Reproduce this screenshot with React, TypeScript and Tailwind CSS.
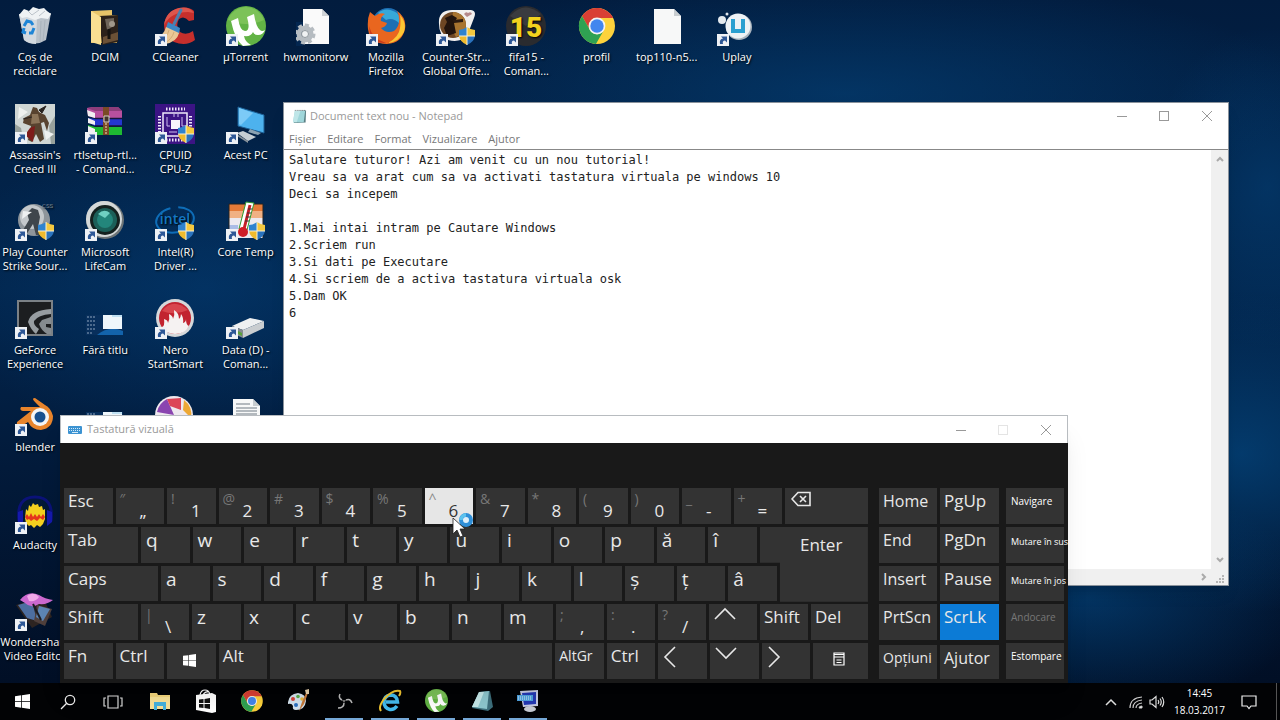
import { useState } from 'react'
import type { ReactNode } from 'react'
import clsx from 'clsx'

type SvgProps = {
  className?: string
}

type DesktopItem = {
  label: string[]
  icon: ReactNode
  shortcut?: boolean
  shield?: boolean
}

type KeyDef = {
  label: string
  sub?: string
  icon?: ReactNode
  className?: string
}

const ChromeIcon = ({ className = 'size-10' }: SvgProps) => (
  <svg viewBox="0 0 40 40" className={className} aria-hidden>
    <circle cx="20" cy="20" r="18" fill="#fdd23c" />
    <path d="M20 12H36.1A18 18 0 0 0 5 10L13 24A8 8 0 0 1 20 12Z" fill="#d93f35" />
    <path d="M5 10A18 18 0 0 0 18.9 38L27 24A8 8 0 0 1 13 24Z" fill="#2fa252" />
    <circle cx="20" cy="20" r="8.4" fill="#f3f3f3" />
    <circle cx="20" cy="20" r="6.7" fill="#4286ee" />
  </svg>
)

const TorrentIcon = ({ className = 'size-10' }: SvgProps) => (
  <svg viewBox="0 0 40 40" className={className} aria-hidden>
    <circle cx="20" cy="20" r="20" fill="#62b345" />
    <path d="M2 14A19 19 0 0 1 38 14Q20 22 2 14Z" fill="#7cc258" />
    <path
      d="M5 15L12 12Q14 25 19 25Q25 25 21 11L28 8Q30 21 34 24Q36 26 39 24Q37 29 32 29Q28 29 27 26Q25 31 18 30Q19 36 25 39L17 40Q9 34 5 15Z"
      fill="#fff"
    />
  </svg>
)

const RecycleIcon = () => (
  <svg viewBox="0 0 40 40" className="size-10" aria-hidden>
    <path d="M4 8L36 7L31 34Q20 41 9 34Z" fill="#b9c1c9" />
    <path d="M4 8L22 12L21 38Q13 38 9 34Z" fill="#d3d9df" />
    <path d="M4 9L9 3L14 5L18 1L24 3L29 2L32 5L36 8L33 13L26 12L20 14L12 11L7 12Z" fill="#eff2f4" />
    <path d="M13 5L17 9L24 4M24 10L30 5" stroke="#bcc3ca" fill="none" />
    <path d="M26 15L25 36M30 14L28 35" stroke="#a5aeb8" strokeWidth="0.8" />
    <path
      d="M9 20L12 15L16 16L18 19M19 22L17 27L14 27M11 27L8 26L9 22"
      fill="none"
      stroke="#1e85d6"
      strokeWidth="3"
    />
  </svg>
)

const FolderIcon = () => (
  <svg viewBox="0 0 40 40" className="size-10" aria-hidden>
    <path d="M6 5L27 4V9H32V37H6Z" fill="#e7c469" />
    <path d="M14 10L33 9V36L17 39Z" fill="#2b211a" />
    <path d="M20 13L29 12V20L22 24Z" fill="#6e6459" />
    <path d="M18 31L33 26V34L18 38Z" fill="#6b5136" />
    <circle cx="27" cy="18" r="3" fill="#a0978a" />
    <path d="M24 23V33" stroke="#151310" strokeWidth="3" />
    <path d="M6 5L16 11V39L6 36Z" fill="#f9df92" />
  </svg>
)

const CleanerIcon = () => (
  <svg viewBox="0 0 40 40" className="size-10" aria-hidden>
    <path
      d="M39 5Q34 0 24 2Q11 5 9 19Q9 32 19 36Q31 41 40 34L38 25Q31 30 25 26Q20 20 24 13Q29 9 34 15L39 14Z"
      fill="#c62f2c"
    />
    <path d="M24 2Q11 5 9 19Q16 6 33 6L39 7Q34 0 24 2Z" fill="#dd554c" />
    <path d="M26 4L19 18" stroke="#4b7fae" strokeWidth="3" strokeLinecap="round" />
    <path d="M13 16L25 22L24 28L11 22Z" fill="#3c87c4" />
    <path d="M11 21L24 27Q22 36 10 38L1 32Q9 29 11 21Z" fill="#eac795" />
    <path d="M14 24Q12 32 5 35M19 26Q17 33 10 37" stroke="#d3ab75" fill="none" />
  </svg>
)

const HwIcon = () => (
  <svg viewBox="0 0 40 40" className="size-10" aria-hidden>
    <path d="M7 3H26L33 10V38H7Z" fill="#fafafa" />
    <path d="M26 3V10H33Z" fill="#cfd3d6" />
    <path d="M0 16H7V40H0Z" fill="#032650" />
    <circle cx="9" cy="28" r="6" fill="none" stroke="#b6bcc1" strokeWidth="5" />
    <circle cx="9" cy="28" r="9" fill="none" stroke="#b6bcc1" strokeWidth="3" strokeDasharray="4 3" />
    <circle cx="9" cy="28" r="3.500" fill="#f0f2f3" stroke="#8f979d" />
  </svg>
)

const FirefoxIcon = () => (
  <svg viewBox="0 0 40 40" className="size-10" aria-hidden>
    <circle cx="22" cy="18" r="16" fill="#1e6fb4" />
    <path d="M12 7Q20 0 31 7Q36 12 34 18Q27 11 20 14Z" fill="#37a8d8" />
    <path
      d="M4 6L9 10Q14 6 19 8Q14 11 15 15L21 17Q20 21 15 22Q20 28 28 25Q34 20 33 12Q33 9 31 5Q41 12 39 23Q36 37 21 38Q4 38 2 23Q1 13 4 6Z"
      fill="#e9661f"
    />
    <path d="M34 9Q41 17 38 26Q33 36 22 37Q33 31 34 22Q35 15 34 9Z" fill="#fbc633" />
    <path d="M3 20Q6 33 20 37Q8 38 4 28Z" fill="#c93b1b" />
  </svg>
)

const CounterIcon = () => (
  <svg viewBox="0 0 40 40" className="size-10" aria-hidden>
    <path d="M3 14Q4 4 16 4H35Q41 5 38 12L31 30Q24 37 12 34Q2 30 3 14Z" fill="#f2f0ee" />
    <circle cx="17" cy="19" r="13" fill="#6d4623" />
    <path d="M17 6A13 13 0 0 1 30 19A13 13 0 0 1 20 31L15 22Z" fill="#a8742f" />
    <path d="M9 12L16 9L21 12L18 17L20 27L11 30L8 22L11 16Z" fill="#22140d" />
    <path d="M17 14L27 13V16L18 17Z" fill="#2b1a10" />
    <path d="M31 11L28 8Q30 5 32 7Q35 5 36 8Z" fill="#b5898a" />
  </svg>
)

const FifaIcon = () => (
  <svg viewBox="0 0 40 40" className="size-10" aria-hidden>
    <circle cx="20" cy="20" r="20" fill="#2a2b2f" />
    <path d="M4 10Q18 -6 35 8L20 20Z" fill="#3a3b3f" />
    <text
      x="20"
      y="31"
      textAnchor="middle"
      fontSize="28"
      fontWeight="900"
      fill="#f2d21e"
      fontFamily="Roboto"
    >
      15
    </text>
  </svg>
)

const FileIcon = ({ lines = false }: { lines?: boolean }) => (
  <svg viewBox="0 0 40 40" className="size-10" aria-hidden>
    <path d="M7 3H27L34 10V38H7Z" fill="#f7f8f8" />
    <path d="M27 3V10H34Z" fill="#c8cdd0" />
    {lines && (
      <path
        d="M10 8H24M10 12H31M10 15H31M10 18H31M10 21H31"
        stroke="#9da4aa"
        strokeWidth="1.4"
      />
    )}
  </svg>
)

const UplayIcon = () => (
  <svg viewBox="0 0 40 40" className="size-10" aria-hidden>
    <circle cx="22" cy="21" r="13" fill="#a9b3bd" />
    <circle cx="21" cy="20" r="12.500" fill="#eef2f5" />
    <circle cx="5" cy="14" r="4" fill="#e3e9ee" />
    <circle cx="10" cy="8" r="1.5" fill="#dfe6ec" />
    <path d="M16 13V25H26M26 13V27" fill="none" stroke="#2b9fd0" strokeWidth="4" />
  </svg>
)

const AssassinIcon = () => (
  <svg viewBox="0 0 40 40" className="size-10" aria-hidden>
    <rect width="40" height="40" fill="#cfd6d4" />
    <path d="M0 20L6 24L9 40H0ZM40 12L34 22L36 40H40Z" fill="#98a19c" />
    <path d="M4 3L13 8L3 15ZM29 26L39 30L31 36Z" fill="#eef1ef" />
    <path
      d="M18 3L22 4L24 8L30 11L34 19L32 27L29 18L26 19L29 35L25 38L21 30L17 38L13 36L16 22L8 19L9 14L15 11Z"
      fill="#58432f"
    />
    <path d="M17 10L23 10L25 19L16 20Z" fill="#8b7458" />
    <path d="M15 24L20 22L18 38L10 31Z" fill="#7e1c1a" />
    <path d="M24 6L31 2L27 9ZM8 15L17 13" stroke="#2a2420" fill="#2a2420" />
  </svg>
)

const RarIcon = () => (
  <svg viewBox="0 0 40 40" className="size-10" aria-hidden>
    <path d="M2 4L8 3H33L37 7V14H10L3 12Z" fill="#b8509f" />
    <path d="M8 3H33L37 7H10L2 4Z" fill="#8d3d7b" />
    <path d="M3 14L10 15H37V22H10L3 18Z" fill="#2436cf" />
    <path d="M3 21L10 23H37V31H10L3 28Z" fill="#1eba32" />
    <path d="M2 6L10 9V14L3 12ZM3 14L10 17V21L3 19ZM3 22L10 25V31L3 28Z" fill="#f2eff2" />
    <path d="M10 14.500H37M10 22H37" stroke="#18143d" strokeWidth="1.500" />
    <path d="M18 3H24V31H18Z" fill="#7a4a26" />
    <path d="M19 12H24V18H19Z" fill="#42352c" stroke="#d8d0c4" />
    <path d="M21 19V30" stroke="#c9b08c" strokeWidth="1.500" strokeDasharray="2 1" />
  </svg>
)

const CpuIcon = () => (
  <svg viewBox="0 0 40 40" className="size-10" aria-hidden>
    <rect width="40" height="40" fill="#3c1484" />
    <rect x="8" y="9" width="24" height="23" fill="none" stroke="#efe9fa" strokeWidth="1.500" />
    <path
      d="M11 5H30M11 36H30"
      stroke="#efe9fa"
      strokeWidth="3"
      strokeDasharray="1.500 1.500"
    />
    <path
      d="M4.500 12V31M35.500 12V31"
      stroke="#efe9fa"
      strokeWidth="3"
      strokeDasharray="1.500 1.500"
    />
    <path d="M16 16H25V25H16Z" fill="#f7f4fc" />
    <path d="M12 13V22H15M19 13V10M23 13V10M27 13V22H30M14 28H22" stroke="#cdbdf0" fill="none" />
  </svg>
)

const PcIcon = () => (
  <svg viewBox="0 0 40 40" className="size-10" aria-hidden>
    <path d="M12 3L38 11V29L12 22Z" fill="#4db2ee" stroke="#1d5f94" />
    <path d="M13 4L27 9L15 21L13 20Z" fill="#7ccaf7" />
    <path d="M24 25L35 29L32 31L22 28Z" fill="#8ba2b2" />
    <path d="M11 29L17 27L30 33L22 37Z" fill="#c6ced4" />
    <path d="M11 30L22 37V39L11 32Z" fill="#89939b" />
  </svg>
)

const SourceIcon = () => (
  <svg viewBox="0 0 40 40" className="size-10" aria-hidden>
    <circle cx="19" cy="19" r="16" fill="#8e959b" />
    <circle cx="17" cy="16" r="12" fill="#c4c8cb" />
    <path d="M17 7L23 9L25 16L23 27L27 34H21L18 23L11 34H5L14 19L12 12Z" fill="#3f464c" />
    <path d="M8 10L17 11L7 18Z" fill="#eef0f1" />
    <text x="27" y="7" fontSize="6" fill="#7f8a96" fontFamily="Roboto">
      CSS
    </text>
  </svg>
)

const CamIcon = () => (
  <svg viewBox="0 0 40 40" className="size-10" aria-hidden>
    <circle cx="20" cy="19" r="19" fill="#6e7577" />
    <circle cx="19" cy="18" r="18" fill="#d4d8d8" />
    <circle cx="20" cy="19" r="15" fill="#14211f" />
    <circle cx="20" cy="19" r="12" fill="#1b5f58" />
    <circle cx="20" cy="19" r="8" fill="#23867b" />
    <path d="M13 13Q19 7 25 12L20 17Z" fill="#6fd0c2" />
  </svg>
)

const IntelIcon = () => (
  <svg viewBox="0 0 40 40" className="size-10" aria-hidden>
    <ellipse
      cx="20"
      cy="19"
      rx="19"
      ry="12.500"
      fill="none"
      stroke="#0e6db8"
      strokeWidth="2"
      strokeDasharray="72 8"
      transform="rotate(-10 20 19)"
    />
    <text
      x="20"
      y="23"
      textAnchor="middle"
      fontSize="14"
      fontWeight="600"
      fill="#1577c4"
      fontFamily="Open Sans"
    >
      intel
    </text>
  </svg>
)

const TempIcon = () => (
  <svg viewBox="0 0 40 40" className="size-10" aria-hidden>
    <path d="M3 3H37V10H3Z" fill="#e47a38" />
    <path d="M3 10H37V17H3Z" fill="#f0b184" />
    <path d="M3 17H37V37H3Z" fill="#eceaf0" />
    <path d="M3 24H12V37H3Z" fill="#a9bce6" />
    <path d="M3 3V37M37 3V37M3 3H37" stroke="#222" fill="none" />
    <path d="M20 1L28 2L21 29L13 28Z" fill="#fff" stroke="#2f9a2f" />
    <path d="M24 4L18 28" stroke="#c61f28" strokeWidth="3" />
    <circle cx="17" cy="31" r="5" fill="#cf1d28" />
    <path d="M26 8L22 8M25 12L21 12M24 16L20 16M23 20L19 20" stroke="#333" />
  </svg>
)

const GeforceIcon = () => (
  <svg viewBox="0 0 40 40" className="size-10" aria-hidden>
    <rect x="3" y="2" width="34" height="34" fill="#1c1e20" stroke="#7b8186" strokeWidth="2" />
    <path d="M36 10Q16 11 13 23Q16 31 21 35L24 30Q18 26 19 22Q23 16 36 15Z" fill="#979da1" />
    <path d="M36 18L27 21L24 25Q26 31 32 35H36V29L31 28V25H36Z" fill="#858b8f" />
  </svg>
)

const ShotIcon = () => (
  <svg viewBox="0 0 40 40" className="size-10" aria-hidden>
    <rect x="1" y="16" width="37" height="20" fill="#082f5c" />
    <path d="M2 18H10M2 22H10M2 26H11M2 30H10M2 34H8" stroke="#8ea5bd" strokeDasharray="2 1" />
    <path d="M12 36Q24 26 38 32V36Z" fill="#1363ab" />
    <rect x="18" y="16" width="19" height="14" fill="#eef6fb" />
    <path d="M27 16H37V18H27Z" fill="#bfe0f2" />
  </svg>
)

const NeroIcon = () => (
  <svg viewBox="0 0 40 40" className="size-10" aria-hidden>
    <circle cx="20" cy="19" r="19" fill="#d5d8da" />
    <circle cx="20" cy="19" r="16" fill="#c22330" />
    <path d="M7 12Q18 -2 33 11Q20 17 7 12Z" fill="#d8464e" />
    <path
      d="M7 28Q10 27 9 20Q13 21 13 24Q15 20 14 15Q18 17 18 20Q20 16 19 11Q24 14 24 20Q26 18 26 15Q29 19 28 24Q31 23 31 20Q31 26 34 27Q30 35 20 35Q11 35 7 28Z"
      fill="#f5f2f2"
    />
  </svg>
)

const DriveIcon = () => (
  <svg viewBox="0 0 40 40" className="size-10" aria-hidden>
    <path d="M6 27L24 19L38 22L17 31Z" fill="#eef0f1" />
    <path d="M6 27L17 31V39L6 34Z" fill="#858b90" />
    <path d="M17 31L38 22V29L17 39Z" fill="#c9cdd0" />
    <path d="M12 32L16 34V37L12 35Z" fill="#5aa038" />
  </svg>
)

const BlenderIcon = () => (
  <svg viewBox="0 0 40 40" className="size-10" aria-hidden>
    <path
      d="M20 2Q16 2 20 6L25 11H6Q4 14 8 15H16L2 26Q1 31 5 31L13 26Q17 34 26 34Q38 32 38 20Q36 12 30 9Z"
      fill="#e8842b"
    />
    <circle cx="25" cy="21" r="9" fill="#f3f5f7" />
    <circle cx="25" cy="21" r="5.500" fill="#17508f" />
  </svg>
)

const PicasaIcon = () => (
  <svg viewBox="0 0 40 40" className="size-10" aria-hidden>
    <circle cx="19" cy="19" r="19" fill="#eee9ef" />
    <path d="M19 19L2 16Q4 7 12 3Z" fill="#8a45b0" />
    <path d="M12 3L26 2V14L15 10Z" fill="#dc4457" />
    <path d="M29 4Q38 11 36 22L28 14Z" fill="#eda834" />
  </svg>
)

const AudacityIcon = () => (
  <svg viewBox="0 0 40 40" className="size-10" aria-hidden>
    <path d="M4 27Q1 3 20 3Q39 3 36 27" fill="none" stroke="#0b1278" strokeWidth="3" />
    <path d="M3 18L8 16V32L3 28ZM37 18L32 16V32L37 28Z" fill="#1519ac" />
    <path
      d="M10 24L11 15L13 17L14 11L16 13L18 9L20 11L23 10L24 13L27 12L28 16L30 15V25L28 30L25 33L22 31L19 34L16 31L14 32L11 29Z"
      fill="#f4cf1f"
    />
    <path
      d="M10 23L12 20L14 23L16 19L18 23L20 20L22 23L24 20L26 23L28 20L30 23L28 26L25 24L22 27L19 25L16 27L14 25L12 26Z"
      fill="#e5341c"
    />
  </svg>
)

const WondershareIcon = () => (
  <svg viewBox="0 0 40 40" className="size-10" aria-hidden>
    <path d="M1 14L28 6L37 26L17 37Z" fill="#2d2421" />
    <path d="M3 14L17 10L22 30L12 27Z" fill="#4d6ea0" />
    <path d="M22 14L37 18L30 35L19 30Z" fill="#50403c" />
    <path d="M24 15L35 18L28 30L21 26Z" fill="#5d85b4" />
    <path d="M5 9Q13 -1 24 4Q30 8 38 9Q32 14 24 13Q16 18 10 12Z" fill="#cc69cf" />
    <path d="M12 5Q19 0 24 6Q21 11 14 10Z" fill="#f1a9e8" />
    <path d="M18 13L26 29" stroke="#1b1b22" strokeWidth="2" />
  </svg>
)

const NotepadIcon = ({ className }: SvgProps) => (
  <svg viewBox="0 0 16 16" className={className} aria-hidden>
    <path d="M4 2L15 1.500L14.500 14.500L2 15Z" fill="#5a7f84" />
    <path d="M3 2L14 2L12.500 14L1 14Z" fill="#9fd6da" />
    <path d="M3 2L9 2L5 14H1Z" fill="#bfe6e8" />
    <path d="M3 1.500H14" stroke="#5b6c6e" strokeDasharray="1 1" />
  </svg>
)

const WindowsIcon = ({ className }: SvgProps) => (
  <svg viewBox="0 0 16 16" className={className} fill="#fff" aria-hidden>
    <path d="M0 2.300L6.600 1.400V7.600H0ZM7.400 1.300L16 0V7.600H7.400ZM0 8.400H6.600V14.600L0 13.700ZM7.400 8.400H16V16L7.400 14.700Z" />
  </svg>
)

const ShortcutBadge = () => (
  <svg viewBox="0 0 12 12" className="absolute bottom-0 left-0 size-3" aria-hidden>
    <rect width="12" height="12" fill="#eef1f5" />
    <path d="M3 10Q2 5 6 4.500L4 2.500H10V8.500L8 6.500Q5 6.500 6 10Z" fill="#2d5796" />
  </svg>
)

const ShieldBadge = () => (
  <svg viewBox="0 0 18 20" className="absolute right-0 bottom-0 h-5 w-[18px]" aria-hidden>
    <path d="M9 1Q5 4 1 4V10H9Z" fill="#2f83cf" />
    <path d="M9 1Q13 4 17 4V10H9Z" fill="#f4c83f" />
    <path d="M1 10H9V19Q2 16 1 10Z" fill="#f0bb2e" />
    <path d="M17 10H9V19Q16 16 17 10Z" fill="#2a72bd" />
    <path d="M9 1V19M1 10H17" stroke="#f5efd6" strokeWidth="1" />
  </svg>
)

const DESKTOP_ROWS: DesktopItem[][] = [
  [
    { label: ['Coș de', 'reciclare'], icon: <RecycleIcon /> },
    { label: ['DCIM'], icon: <FolderIcon /> },
    { label: ['CCleaner'], icon: <CleanerIcon />, shortcut: true },
    { label: ['µTorrent'], icon: <TorrentIcon />, shortcut: true },
    { label: ['hwmonitorw'], icon: <HwIcon /> },
    { label: ['Mozilla', 'Firefox'], icon: <FirefoxIcon />, shortcut: true },
    {
      label: ['Counter-Str...', 'Global Offe...'],
      icon: <CounterIcon />,
      shortcut: true,
      shield: true,
    },
    { label: ['fifa15 -', 'Coman...'], icon: <FifaIcon />, shortcut: true },
    { label: ['profil'], icon: <ChromeIcon /> },
    { label: ['top110-n5...'], icon: <FileIcon /> },
    { label: ['Uplay'], icon: <UplayIcon />, shortcut: true },
  ],
  [
    { label: ["Assassin's", 'Creed III'], icon: <AssassinIcon />, shortcut: true },
    { label: ['rtlsetup-rtl...', '- Comand...'], icon: <RarIcon />, shortcut: true },
    { label: ['CPUID', 'CPU-Z'], icon: <CpuIcon />, shortcut: true, shield: true },
    { label: ['Acest PC'], icon: <PcIcon />, shortcut: true },
  ],
  [
    {
      label: ['Play Counter', 'Strike Sour...'],
      icon: <SourceIcon />,
      shortcut: true,
      shield: true,
    },
    { label: ['Microsoft', 'LifeCam'], icon: <CamIcon />, shortcut: true },
    { label: ['Intel(R)', 'Driver ...'], icon: <IntelIcon />, shortcut: true, shield: true },
    { label: ['Core Temp'], icon: <TempIcon />, shortcut: true, shield: true },
  ],
  [
    { label: ['GeForce', 'Experience'], icon: <GeforceIcon />, shortcut: true },
    { label: ['Fără titlu'], icon: <ShotIcon /> },
    { label: ['Nero', 'StartSmart'], icon: <NeroIcon />, shortcut: true },
    { label: ['Data (D) -', 'Coman...'], icon: <DriveIcon />, shortcut: true },
  ],
  [
    { label: ['blender'], icon: <BlenderIcon />, shortcut: true },
    { label: [], icon: <ShotIcon /> },
    { label: [], icon: <PicasaIcon /> },
    { label: [], icon: <FileIcon lines /> },
  ],
  [{ label: ['Audacity'], icon: <AudacityIcon />, shortcut: true }],
  [{ label: ['Wondershare', 'Video Editor'], icon: <WondershareIcon />, shortcut: true }],
]

const NOTEPAD_MENU = ['Fișier', 'Editare', 'Format', 'Vizualizare', 'Ajutor']

const NOTEPAD_TEXT = `Salutare tuturor! Azi am venit cu un nou tutorial!
Vreau sa va arat cum sa va activati tastatura virtuala pe windows 10
Deci sa incepem

1.Mai intai intram pe Cautare Windows
2.Scriem run
3.Si dati pe Executare
4.Si scriem de a activa tastatura virtuala osk
5.Dam OK
6`

const Chevron = ({ d }: { d: string }) => (
  <svg
    viewBox="0 0 24 24"
    className="size-6"
    fill="none"
    stroke="#e8e8e8"
    strokeWidth="1.600"
    aria-hidden
  >
    <path d={d} />
  </svg>
)

const letters = (chars: string): KeyDef[] =>
  [...chars].map((char) => ({ label: char, className: 'flex-1 pl-[5px] text-[19px]' }))

const pairs = (list: string[]): KeyDef[] =>
  list.map((item) => ({ sub: item[0], label: item[1], className: 'flex-1' }))

const KEY_ROWS: KeyDef[][] = [
  [
    { label: 'Esc', className: 'flex-1' },
    ...pairs(['″„', '!1', '@2', '#3', '$4', '%5', '^6', '&7', '*8', '(9', ')0', '_-', '+=']),
    {
      label: 'Backspace',
      className: 'w-[83px]',
      icon: (
        <svg viewBox="0 0 20 16" className="ml-[2px] h-4 w-5" fill="none" stroke="#e8e8e8" aria-hidden>
          <path d="M1 8L7 1.500H19V14.500H7Z" strokeWidth="1.600" />
          <path d="M9 5L15 11M15 5L9 11" strokeWidth="1.600" />
        </svg>
      ),
    },
  ],
  [
    { label: 'Tab', className: 'w-[74px]' },
    ...letters('qwertyuiopăî'),
    {
      label: 'Enter',
      className:
        'h-[75px] w-[108px] pt-2 pl-10 [clip-path:polygon(0_0,100%_0,100%_100%,20px_100%,20px_36px,0_36px)]',
    },
  ],
  [{ label: 'Caps', className: 'w-[94px]' }, ...letters('asdfghjklșțâ')],
  [
    { label: 'Shift', className: 'w-[74px]' },
    ...pairs(['|\\']),
    ...letters('zxcvbnm'),
    ...pairs([';,', ':.', '?/']),
    { label: 'Sus', className: 'flex-1', icon: <Chevron d="M2 12L12 2L22 12" /> },
    { label: 'Shift', className: 'flex-1' },
    { label: 'Del', className: 'w-[57px]' },
  ],
  [
    { label: 'Fn', className: 'flex-1' },
    { label: 'Ctrl', className: 'flex-1' },
    {
      label: 'Windows',
      className: 'flex-1',
      icon: <WindowsIcon className="mt-2 ml-3 size-[13px]" />,
    },
    { label: 'Alt', className: 'flex-1' },
    { label: '', className: 'w-[282px]' },
    { label: 'AltGr', className: 'flex-1 text-sm' },
    { label: 'Ctrl', className: 'flex-1' },
    { label: 'Stânga', className: 'flex-1', icon: <Chevron d="M13 1L3 11L13 21" /> },
    { label: 'Jos', className: 'flex-1', icon: <Chevron d="M2 2L12 12L22 2" /> },
    { label: 'Dreapta', className: 'flex-1', icon: <Chevron d="M3 1L13 11L3 21" /> },
    {
      label: 'Meniu',
      className: 'w-[55px]',
      icon: (
        <svg viewBox="0 0 12 14" className="mt-[6px] ml-4 h-[14px] w-3" fill="none" stroke="#fff" aria-hidden>
          <path d="M1 1H11V13H1ZM1 2.500H11M1 5H11" strokeWidth="1.200" />
          <path d="M3.500 8H8.500M3.500 10.500H8.500" />
        </svg>
      ),
    },
  ],
]

const NAV_KEYS = [
  ['Home', 'PgUp', 'Navigare'],
  ['End', 'PgDn', 'Mutare în sus'],
  ['Insert', 'Pause', 'Mutare în jos'],
  ['PrtScn', 'ScrLk', 'Andocare'],
  ['Opțiuni', 'Ajutor', 'Estompare'],
]

const Key = ({ label, sub, icon, className }: KeyDef) => {
  const active = label === '6'

  return (
    <button
      type="button"
      aria-label={label || 'Spațiu'}
      className={clsx(
        'flex min-w-0 items-start text-left leading-5 whitespace-nowrap',
        !className?.includes('pl-') && 'pl-1',
        !className?.includes('pt-') && !sub && 'pt-[3px]',
        !className?.includes('text-') && 'text-[17px]',
        active ? 'bg-[#e6e6e6] text-[#333]' : 'bg-[#333] text-[#e8e8e8]',
        className,
      )}
    >
      {sub && (
        <span className={clsx('w-5 pt-[3px] text-sm leading-4', active ? 'text-[#888]' : 'text-[#777]')}>
          {sub}
        </span>
      )}
      {icon || <span className={clsx(sub && 'pt-[13px]')}>{label}</span>}
    </button>
  )
}

const WindowControls = ({ noMaximize }: { noMaximize?: boolean }) => (
  <div className="ml-auto flex h-full text-[#999]">
    <button type="button" aria-label="Minimizare" className="grid w-[42px] place-items-center">
      <svg viewBox="0 0 10 10" className="size-[10px]" stroke="currentColor" aria-hidden>
        <path d="M0 5.500H10" />
      </svg>
    </button>
    <button
      type="button"
      aria-label="Maximizare"
      disabled={noMaximize}
      className={clsx('grid w-[42px] place-items-center', noMaximize && 'text-[#e4e4e4]')}
    >
      <svg viewBox="0 0 10 10" className="size-[10px]" fill="none" stroke="currentColor" aria-hidden>
        <rect x="0.500" y="0.500" width="9" height="9" />
      </svg>
    </button>
    <button type="button" aria-label="Închidere" className="grid w-[43px] place-items-center">
      <svg viewBox="0 0 10 10" className="size-[10px]" stroke="currentColor" aria-hidden>
        <path d="M0 0L10 10M10 0L0 10" />
      </svg>
    </button>
  </div>
)

const Desktop = () => (
  <div className="grid h-[683px] w-[772px] grid-rows-7">
    {DESKTOP_ROWS.map((row, index) => (
      <div key={index} className="grid grid-cols-11">
        {row.map((item, column) => (
          <a
            key={column}
            href="#"
            className="flex flex-col items-center pt-[6px] text-[11px] leading-[14px] whitespace-nowrap text-white [text-shadow:1px_1px_2px_#000]"
          >
            <span className="relative mb-1 size-10">
              {item.icon}
              {item.shortcut && <ShortcutBadge />}
              {item.shield && <ShieldBadge />}
            </span>
            {item.label.map((line) => (
              <span key={line}>{line}</span>
            ))}
          </a>
        ))}
      </div>
    ))}
  </div>
)

const Notepad = () => {
  const [text, setText] = useState(NOTEPAD_TEXT)

  return (
    <section className="absolute top-[102px] left-[283px] flex h-[484px] w-[946px] flex-col border border-[#8a929b] bg-white shadow-lg">
      <header className="flex h-[26px] items-center pl-2 text-[11px] text-[#999]">
        <NotepadIcon className="mr-[3px] size-[15px]" />
        <h1>Document text nou - Notepad</h1>
        <WindowControls />
      </header>
      <nav className="flex h-[21px] items-center gap-[11px] border-b border-[#888] pl-[5px] text-[11px] text-[#777]">
        {NOTEPAD_MENU.map((item) => (
          <button key={item} type="button">
            {item}
          </button>
        ))}
      </nav>
      <div className="flex flex-1">
        <textarea
          aria-label="Document"
          value={text}
          onChange={(event) => setText(event.target.value)}
          className="flex-1 resize-none overflow-hidden pt-[2px] pl-[5px] font-['DejaVu_Sans_Mono',monospace] text-xs leading-[17px] text-[#222] outline-none"
        />
        <div className="flex w-[17px] flex-col items-center justify-between bg-[#f0f0f0] py-[6px]">
          <svg viewBox="0 0 8 6" className="h-[6px] w-2" fill="none" stroke="#aaa" strokeWidth="2" aria-hidden>
            <path d="M1 5L4 2L7 5" />
          </svg>
          <svg viewBox="0 0 8 6" className="h-[6px] w-2" fill="none" stroke="#aaa" strokeWidth="2" aria-hidden>
            <path d="M1 1L4 4L7 1" />
          </svg>
        </div>
      </div>
      <footer className="flex h-4 items-center justify-end gap-2 bg-[#f0f0f0] pr-[3px]">
        <svg viewBox="0 0 6 8" className="h-2 w-[6px]" fill="none" stroke="#aaa" strokeWidth="2" aria-hidden>
          <path d="M1 1L4 4L1 7" />
        </svg>
        <svg viewBox="0 0 10 10" className="mt-1 size-[10px]" fill="#b5b5b5" aria-hidden>
          <path d="M7 1H9V3H7ZM4 4H6V6H4ZM7 4H9V6H7ZM1 7H3V9H1ZM4 7H6V9H4ZM7 7H9V9H7Z" />
        </svg>
      </footer>
    </section>
  )
}

const ScreenKeyboard = () => (
  <section className="absolute top-[415px] left-[60px] flex w-[1008px] flex-col overflow-hidden bg-[#191919] shadow-xl">
    <header className="flex h-7 items-center border border-b-0 border-[#b8bcc0] bg-white pl-[7px] text-[11px] text-[#999]">
      <svg viewBox="0 0 14 8" className="mr-[5px] h-2 w-[14px]" aria-hidden>
        <rect width="14" height="8" rx="1" fill="#3c93d2" />
        <path d="M1 2.500H13M1 4.500H13" stroke="#d6ebf8" strokeDasharray="1 1" />
        <path d="M4 6.500H10" stroke="#d6ebf8" />
      </svg>
      <h2>Tastatură vizuală</h2>
      <WindowControls noMaximize />
    </header>
    <div className="flex gap-[11px] px-1 pt-[45px] pb-1">
      <div className="grid h-[191px] w-[804px] grid-rows-5 gap-[3px]">
        {KEY_ROWS.map((row, index) => (
          <div key={index} className="flex gap-[3px]">
            {row.map((item, column) => (
              <Key key={column} {...item} />
            ))}
            {index === 2 && <span className="w-[88px]" />}
          </div>
        ))}
      </div>
      <div className="grid h-[191px] flex-1 grid-rows-5 gap-[3px]">
        {NAV_KEYS.map(([first, second, third]) => (
          <div key={first} className="flex gap-[3px]">
            <button
              type="button"
              className={clsx(
                'flex w-[58px] items-start bg-[#333] pt-[3px] pl-1 leading-5 text-[#e8e8e8]',
                first === 'Opțiuni' ? 'mt-[2px] text-sm' : 'text-base',
              )}
            >
              {first}
            </button>
            <button
              type="button"
              className={clsx(
                'flex w-[59px] items-start pt-[3px] pl-1 leading-5 text-[#e8e8e8]',
                second === 'ScrLk' ? 'bg-[#0c7bd6]' : 'bg-[#333]',
                second === 'Ajutor' ? 'mt-[2px] text-base' : 'text-[17px]',
              )}
            >
              {second}
            </button>
            <button
              type="button"
              disabled={third === 'Andocare'}
              className={clsx(
                'ml-1 flex w-[58px] items-start bg-[#333] pl-[5px] leading-5 whitespace-nowrap',
                third.startsWith('Mutare') ? 'pt-[5px] text-[9px]' : 'pt-[3px] text-[10px]',
                third === 'Andocare' ? 'text-[#777]' : 'text-white',
              )}
            >
              {third}
            </button>
          </div>
        ))}
      </div>
    </div>
  </section>
)

const BusyCursor = () => (
  <svg viewBox="0 0 24 26" className="absolute top-[512px] left-[452px] h-[26px] w-6" aria-hidden>
    <path d="M1 6V22L5 18L8 25L11 24L8 17H13Z" fill="#fff" stroke="#222" strokeWidth="0.800" />
    <circle cx="14" cy="8" r="5" fill="#dff0fa" stroke="#2f8fd8" strokeWidth="4" />
    <path d="M9 8A5 5 0 0 1 14 3" fill="none" stroke="#5cc3ee" strokeWidth="3.500" />
  </svg>
)

const SYSTEM_TASKS = [
  {
    name: 'Start',
    icon: <WindowsIcon className="size-[15px]" />,
  },
  {
    name: 'Căutare',
    icon: (
      <svg viewBox="0 0 16 16" className="size-4" fill="none" stroke="#eee" strokeWidth="1.300" aria-hidden>
        <circle cx="10" cy="6" r="4.700" />
        <path d="M6.700 9.300L1 15" />
      </svg>
    ),
  },
  {
    name: 'Vizualizare activități',
    icon: (
      <svg viewBox="0 0 20 16" className="h-4 w-5" fill="none" stroke="#ddd" strokeWidth="1.200" aria-hidden>
        <path d="M5 2H15V14H5ZM3 4H1V12H3M17 4H19V12H17" />
      </svg>
    ),
  },
]

const APP_TASKS = [
  {
    name: 'Explorator',
    icon: (
      <svg viewBox="0 0 22 20" className="h-5 w-[22px]" aria-hidden>
        <path d="M1 2H8L9 4H21V18H1Z" fill="#f5d77c" />
        <path d="M1 6H21V18H1Z" fill="#fae498" />
        <path d="M5 11H17V19H14V15H8V19H5Z" fill="#45b2dd" />
      </svg>
    ),
  },
  {
    name: 'Magazin',
    icon: (
      <svg viewBox="0 0 22 24" className="h-6 w-[22px]" aria-hidden>
        <path d="M5 6Q6 1 10 1Q14 1 15 6M8 6Q10 2 13 3" fill="none" stroke="#fff" strokeWidth="1.200" />
        <path d="M1 6L17 4L21 6V23L17 24L1 21Z" fill="#fff" />
        <path d="M4 10.500L8.500 10V14H4ZM9.500 10L15 9V14H9.500ZM4 15H8.500V19L4 18.500ZM9.500 15H15V20L9.500 19Z" fill="#111" />
      </svg>
    ),
  },
  { name: 'Chrome', icon: <ChromeIcon className="size-6" /> },
  {
    name: 'Paint',
    icon: (
      <svg viewBox="0 0 24 24" className="size-6" aria-hidden>
        <path d="M2 13Q3 5 12 4Q20 5 20 12Q19 21 10 21Q6 21 7 17Q6 14 2 15Z" fill="#d5e3ef" />
        <circle cx="7" cy="10" r="2" fill="#d5443a" />
        <circle cx="12" cy="7.500" r="1.800" fill="#59ad4a" />
        <circle cx="16" cy="10" r="1.800" fill="#e9b93a" />
        <circle cx="10" cy="16" r="2" fill="#2e72c2" />
        <path d="M20 4L16 13L13 22L18 15L22 4Z" fill="#c67a3b" />
        <path d="M19 1L23 0V5H20Z" fill="#ead3ae" />
      </svg>
    ),
  },
  {
    name: 'OBS',
    running: true,
    icon: (
      <svg viewBox="0 0 20 20" className="size-5" fill="none" stroke="#b9b9b9" strokeWidth="1.500" aria-hidden>
        <path d="M6 3Q4 7 8 9M12 9Q16 7 18 12M10 12Q10 17 4 17" />
        <path d="M8 9L12 9L10 12Z" fill="#777" stroke="none" />
      </svg>
    ),
  },
  {
    name: 'Internet Explorer',
    running: true,
    icon: (
      <svg viewBox="0 0 24 24" className="size-6" aria-hidden>
        <path
          d="M19 17Q16 21 12 20.500Q6 19 6 13Q6 7 12.500 6Q19 6 19.500 13H8"
          fill="none"
          stroke="#45bdf0"
          strokeWidth="3.500"
        />
        <path d="M3 22Q0 18 6 10Q15 0 22 2Q23 4 21 7" fill="none" stroke="#f1c531" strokeWidth="2" />
      </svg>
    ),
  },
  { name: 'µTorrent', running: true, icon: <TorrentIcon className="size-[23px]" /> },
  {
    name: 'Notepad',
    running: true,
    icon: (
      <svg viewBox="0 0 22 22" className="size-[22px]" aria-hidden>
        <path d="M9 2L19 1L22 17L17 21L1 18Z" fill="#3d6f7c" />
        <path d="M8 2L18 1L16 19L1 17Z" fill="#8ec8cf" />
        <path d="M8 2L13 2L7 17L1 17Z" fill="#c6e9ea" />
      </svg>
    ),
  },
  {
    name: 'Tastatură vizuală',
    running: true,
    icon: (
      <svg viewBox="0 0 22 24" className="h-6 w-[22px]" aria-hidden>
        <ellipse cx="13" cy="20" rx="6" ry="3" fill="#c8ccd4" />
        <path d="M3 2L21 1V17L6 18Z" fill="#c9cde6" />
        <path d="M5 4L19 3V15L7 16Z" fill="#2439b5" />
        <path d="M0 6H16V12H0Z" fill="#4fa3e0" />
        <path d="M1 8H15M1 10H15" stroke="#d9effb" strokeDasharray="1 1" />
      </svg>
    ),
  },
]

const Taskbar = () => (
  <footer className="flex h-[37px] items-stretch bg-[#020305] text-white">
    <div className="flex pr-[2px]">
      {SYSTEM_TASKS.map((task) => (
        <button
          key={task.name}
          type="button"
          aria-label={task.name}
          className="grid w-[45px] place-items-center"
        >
          {task.icon}
        </button>
      ))}
    </div>
    {APP_TASKS.map((task) => (
      <button
        key={task.name}
        type="button"
        aria-label={task.name}
        className="flex w-[46px] flex-col items-center"
      >
        <span className="grid flex-1 place-items-center">{task.icon}</span>
        <span className={clsx('h-[2px] w-[38px]', task.running && 'bg-[#76a9d8]')} />
      </button>
    ))}
    <div className="ml-auto flex items-center">
      <button type="button" aria-label="Pictograme ascunse" className="mr-3">
        <svg viewBox="0 0 12 8" className="h-2 w-3" fill="none" stroke="#ddd" strokeWidth="1.500" aria-hidden>
          <path d="M1 7L6 2L11 7" />
        </svg>
      </button>
      <svg viewBox="0 0 14 14" className="mr-[6px] size-[14px]" fill="none" stroke="#ccc" aria-hidden>
        <path d="M1 13Q1 3 13 2M4 13Q4 6 13 5M7 13Q7 9 13 8" strokeWidth="1.200" />
        <path d="M10 13Q10 11 13 11V13Z" fill="#fff" />
      </svg>
      <svg viewBox="0 0 16 14" className="mr-[9px] h-[14px] w-4" fill="none" stroke="#ddd" strokeWidth="1.200" aria-hidden>
        <path d="M1 5H3L7 1.500V12.500L3 9H1ZM9 5Q10.500 7 9 9M11 3.500Q13.500 7 11 10.500M13 2Q16.500 7 13 12" />
      </svg>
      <time className="w-[51px] text-center text-[10px] leading-[17px] whitespace-nowrap">
        14:45
        <br />
        18.03.2017
      </time>
      <button type="button" aria-label="Notificări" className="ml-4">
        <svg viewBox="0 0 16 16" className="size-4" fill="none" stroke="#eee" strokeWidth="1.200" aria-hidden>
          <path d="M1 2H15V12H10L8 14.500L6 12H1Z" />
        </svg>
      </button>
      <span className="mr-[3px] ml-[19px] h-[37px] w-px bg-[#555]" />
    </div>
  </footer>
)

const App = () => (
  <main className="relative flex min-h-screen flex-col justify-between overflow-hidden bg-[#02234a] bg-[radial-gradient(ellipse_200px_160px_at_97%_63%,#044a84aa,transparent),radial-gradient(ellipse_220px_120px_at_85%_83%,#04447caa,transparent),radial-gradient(ellipse_460px_120px_at_66%_13%,#043f74aa,transparent),radial-gradient(ellipse_120px_160px_at_99%_26%,#043f7499,transparent),radial-gradient(ellipse_260px_160px_at_16%_40%,#033a7099,transparent),linear-gradient(to_bottom,#021c3e,#02264e_40%,#021a3a_65%,#010d22)] font-['Open_Sans',sans-serif]">
    <Desktop />
    <Notepad />
    <ScreenKeyboard />
    <BusyCursor />
    <Taskbar />
  </main>
)

export default App
